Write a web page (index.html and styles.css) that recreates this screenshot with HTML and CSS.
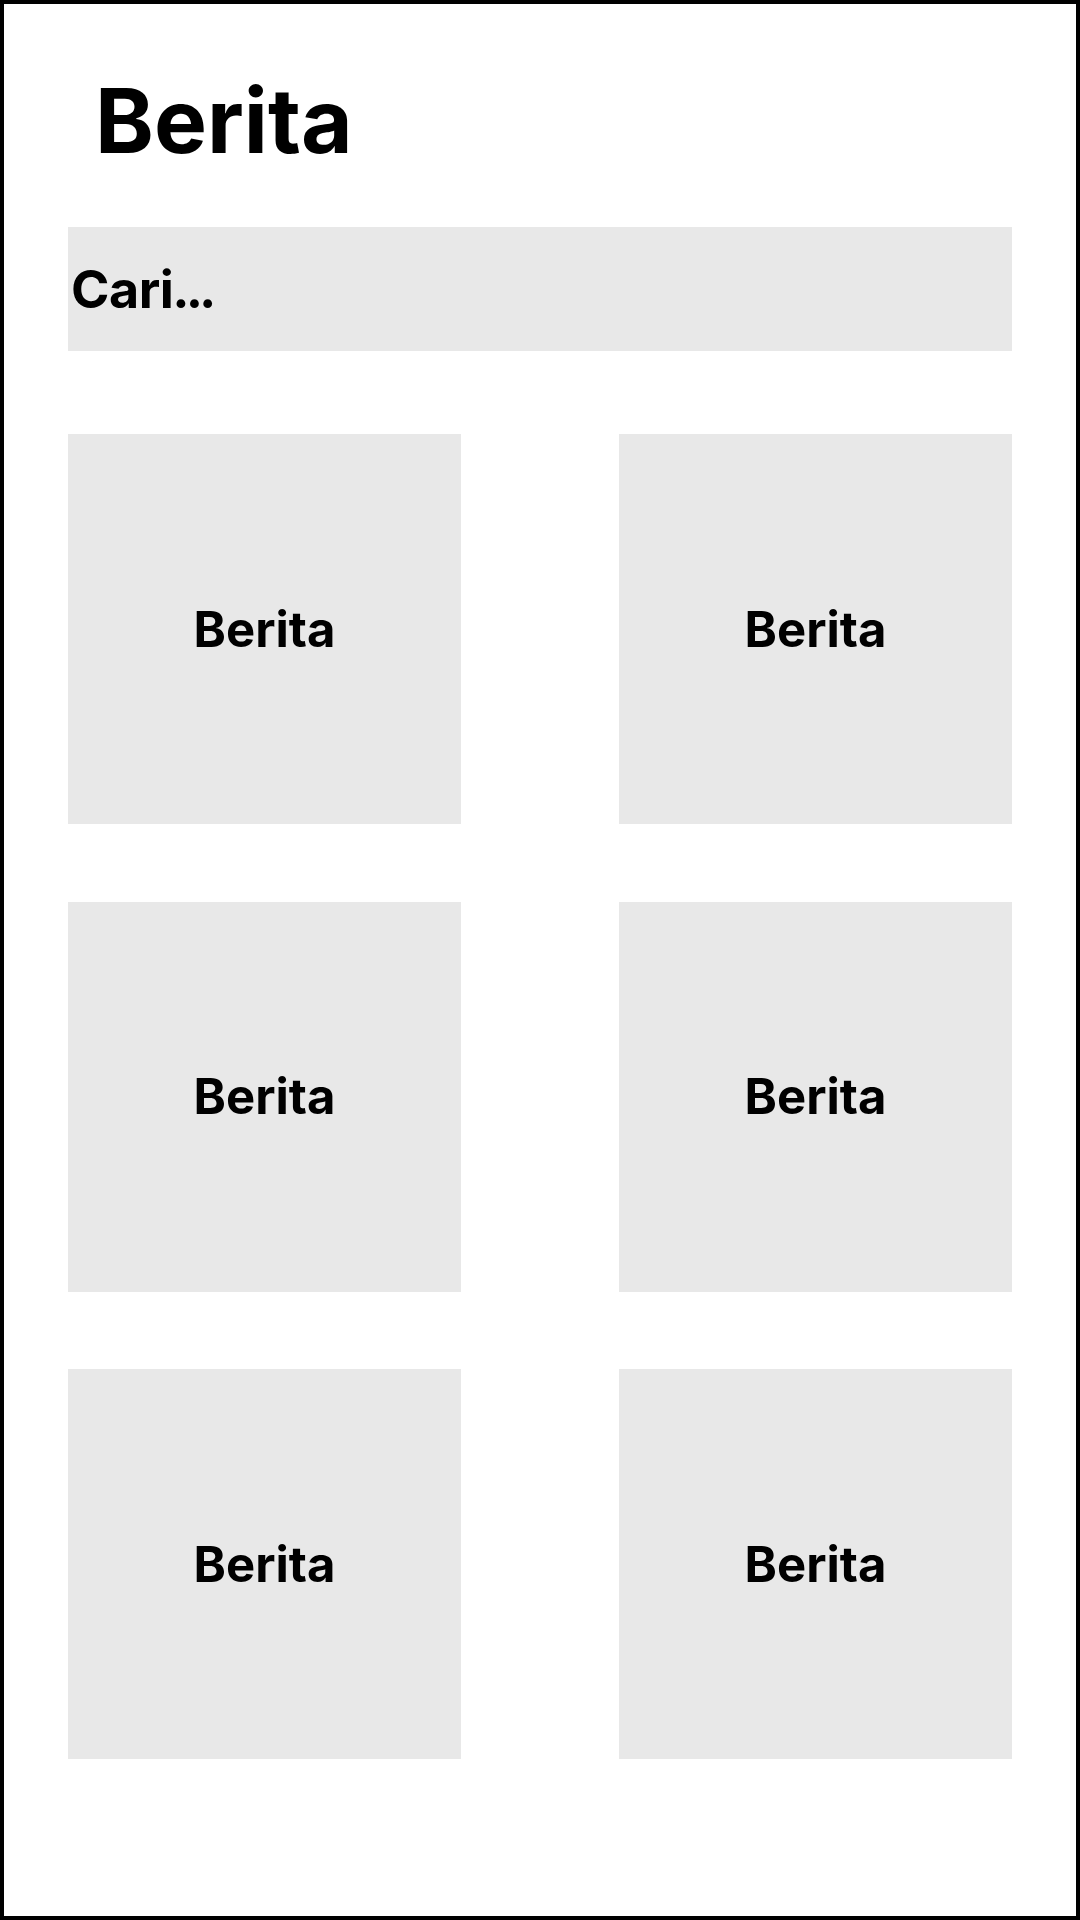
FILE: index.html
```html
<!DOCTYPE html>
<html lang="id">
<head>
<meta charset="utf-8">
<title>Berita</title>
<link rel="stylesheet" href="styles.css">
</head>
<body>
<div class="screen">
  <h1 class="title">Berita</h1>
  <div class="search">Cari<span class="dots">...</span></div>
  <div class="grid">
    <div class="card">Berita</div>
    <div class="card">Berita</div>
    <div class="card">Berita</div>
    <div class="card">Berita</div>
    <div class="card">Berita</div>
    <div class="card">Berita</div>
  </div>
</div>
</body>
</html>
```

FILE: styles.css
```css
* { box-sizing: border-box; }
html, body { margin: 0; padding: 0; background: #fff; }
body {
  font-family: "Inter", "Liberation Sans", sans-serif;
  color: #000;
}
.screen {
  width: 1080px;
  height: 1920px;
  border: 4px solid #000;
  padding: 64px 64px 0 64px;
  display: flex;
  flex-direction: column;
}
.title {
  margin: 0 0 53px 27px;
  font-size: 89px;
  font-weight: 700;
  line-height: 106px;
  letter-spacing: 0;
}
.search {
  height: 124px;
  background: #e8e8e8;
  display: flex;
  align-items: center;
  padding: 0 3px;
  font-size: 52px;
  font-weight: 700;
  letter-spacing: -0.5px;
}
.dots {
  letter-spacing: -4px;
  margin-left: -1px;
}
.grid {
  margin-top: 83px;
  display: grid;
  grid-template-columns: 393px 393px;
  grid-auto-rows: 390px;
  justify-content: space-between;
  row-gap: 77.5px;
}
.card {
  background: #e8e8e8;
  display: flex;
  align-items: center;
  justify-content: center;
  font-size: 49px;
  font-weight: 700;
}
```
